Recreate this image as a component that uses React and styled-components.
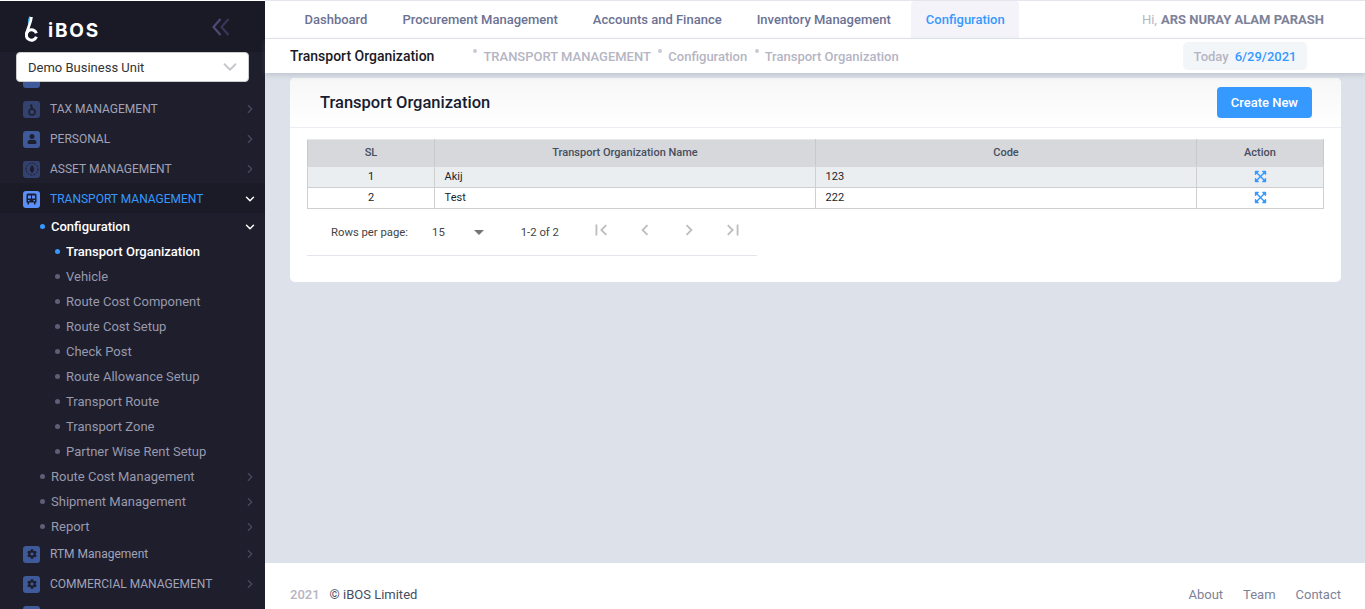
import React from 'react'
import styled, { createGlobalStyle } from 'styled-components'
import { ChevronRight, ChevronDown } from 'lucide-react'
import { FaExpandArrowsAlt, FaCog, FaUser } from 'react-icons/fa'
import { MdFirstPage, MdLastPage, MdChevronLeft, MdChevronRight, MdArrowDropDown } from 'react-icons/md'

const GlobalStyle = createGlobalStyle`
  html, body { margin: 0; padding: 0; height: 100%; overflow: hidden; }
  body { font-family: Roboto, "Liberation Sans", sans-serif; background: #fff; }
  * { box-sizing: border-box; }
`

const configItems = [
  'Vehicle',
  'Route Cost Component',
  'Route Cost Setup',
  'Check Post',
  'Route Allowance Setup',
  'Transport Route',
  'Transport Zone',
  'Partner Wise Rent Setup',
]

const LogoMark = () => (
  <svg width="14" height="26" viewBox="0 0 14 26" fill="none">
    <path d="M5.2 0.5 C3.6 3 3.4 6 4 9" stroke="#35a7e8" strokeWidth="1.6" />
    <path d="M6.4 1 C6 8 2 12 1.4 19" stroke="#fff" strokeWidth="2.8" />
    <path d="M11.4 20.8 A5.2 5.2 0 1 1 11.4 17.2" stroke="#fff" strokeWidth="3" />
  </svg>
)

const CollapseIcon = () => (
  <svg width="18" height="18" viewBox="0 0 18 18" fill="none" stroke="#494b74" strokeWidth="2.2">
    <polyline points="8.5,1 1.5,9 8.5,17" />
    <polyline points="16.5,1 9.5,9 16.5,17" opacity="0.6" />
  </svg>
)

const TaxIcon = () => (
  <svg width="12" height="13" viewBox="0 0 12 13" fill="none">
    <circle cx="6" cy="9" r="3" stroke="#1e1e2d" strokeWidth="1.5" />
    <path d="M6 6 L5 1.5" stroke="#1e1e2d" strokeWidth="2" />
  </svg>
)

const AssetIcon = () => (
  <svg width="14" height="14" viewBox="0 0 14 14" fill="none">
    <circle cx="7" cy="7" r="6" stroke="#1e1e2d" strokeWidth="1" strokeDasharray="2 1" />
    <path d="M7 3 C9.8 6 9.8 9 7 11 C4.2 9 4.2 6 7 3 Z" fill="#1e1e2d" />
  </svg>
)

const BusIcon = () => (
  <svg width="11" height="12" viewBox="0 0 11 12">
    <path
      d="M2 0.5 H9 A1.5 1.5 0 0 1 10.5 2 V9.5 H9.5 V11.5 H8 V9.5 H3 V11.5 H1.5 V9.5 H0.5 V2 A1.5 1.5 0 0 1 2 0.5 Z"
      fill="#1e1e2d"
    />
    <rect x="2" y="2.5" width="3" height="3" fill="#5b8ff9" />
    <rect x="6" y="2.5" width="3" height="3" fill="#5b8ff9" />
    <rect x="2" y="7" width="1.5" height="1.2" fill="#5b8ff9" />
    <rect x="7.5" y="7" width="1.5" height="1.2" fill="#5b8ff9" />
  </svg>
)

const App = () => {
  return (
    <>
      <GlobalStyle />
      <Page>
        <Sidebar>
          <Brand>
            <LogoLink>
              <LogoMark />
              <LogoText>iBOS</LogoText>
            </LogoLink>
            <Collapse>
              <CollapseIcon />
            </Collapse>
          </Brand>
          <UnitSelect>
            <span>Demo Business Unit</span>
            <ChevronDown size={22} strokeWidth={2} color="#c4c6cc" />
          </UnitSelect>
          <Menu>
            <TopRow>
              <IconBox />
            </TopRow>
            <TopRow>
              <IconBox $dim><TaxIcon /></IconBox>
              <TopLabel>TAX MANAGEMENT</TopLabel>
              <Arrow><ChevronRight size={14} /></Arrow>
            </TopRow>
            <TopRow>
              <IconBox><FaUser size={10} /></IconBox>
              <TopLabel>PERSONAL</TopLabel>
              <Arrow><ChevronRight size={14} /></Arrow>
            </TopRow>
            <TopRow>
              <IconBox $dim><AssetIcon /></IconBox>
              <TopLabel>ASSET MANAGEMENT</TopLabel>
              <Arrow><ChevronRight size={14} /></Arrow>
            </TopRow>
            <TopRow $active>
              <IconBox $active><BusIcon /></IconBox>
              <TopLabel $active>TRANSPORT MANAGEMENT</TopLabel>
              <Arrow $open><ChevronDown size={14} strokeWidth={2.5} /></Arrow>
            </TopRow>
            <SubRow $active>
              <Dot $active />
              <SubLabel $active>Configuration</SubLabel>
              <Arrow $open><ChevronDown size={14} strokeWidth={2.5} /></Arrow>
            </SubRow>
            <LeafRow $active>
              <Dot $active />
              <SubLabel $active>Transport Organization</SubLabel>
            </LeafRow>
            {configItems.map((item) => (
              <LeafRow key={item}>
                <Dot />
                <SubLabel>{item}</SubLabel>
              </LeafRow>
            ))}
            <SubRow>
              <Dot />
              <SubLabel>Route Cost Management</SubLabel>
              <Arrow><ChevronRight size={14} /></Arrow>
            </SubRow>
            <SubRow>
              <Dot />
              <SubLabel>Shipment Management</SubLabel>
              <Arrow><ChevronRight size={14} /></Arrow>
            </SubRow>
            <SubRow>
              <Dot />
              <SubLabel>Report</SubLabel>
              <Arrow><ChevronRight size={14} /></Arrow>
            </SubRow>
            <TopRow>
              <IconBox><FaCog size={10} /></IconBox>
              <TopLabel>RTM Management</TopLabel>
              <Arrow><ChevronRight size={14} /></Arrow>
            </TopRow>
            <TopRow>
              <IconBox><FaCog size={10} /></IconBox>
              <TopLabel>COMMERCIAL MANAGEMENT</TopLabel>
              <Arrow><ChevronRight size={14} /></Arrow>
            </TopRow>
            <TopRow>
              <IconBox />
            </TopRow>
          </Menu>
        </Sidebar>
        <Main>
          <TopNav>
            <NavTab>Dashboard</NavTab>
            <NavTab>Procurement Management</NavTab>
            <NavTab>Accounts and Finance</NavTab>
            <NavTab>Inventory Management</NavTab>
            <NavTab $active>Configuration</NavTab>
            <Greeting>Hi, <strong>ARS NURAY ALAM PARASH</strong></Greeting>
          </TopNav>
          <SubHeader>
            <PageName>Transport Organization</PageName>
            <Crumbs>
              <Crumb>TRANSPORT MANAGEMENT</Crumb>
              <Crumb>Configuration</Crumb>
              <Crumb>Transport Organization</Crumb>
            </Crumbs>
            <DateBadge>Today <b>6/29/2021</b></DateBadge>
          </SubHeader>
          <Content>
            <Card>
              <CardHead>
                <CardTitle>Transport Organization</CardTitle>
                <CreateButton>Create New</CreateButton>
              </CardHead>
              <CardBody>
                <Table>
                  <colgroup>
                    <col style={{ width: 127 }} />
                    <col style={{ width: 381 }} />
                    <col style={{ width: 381 }} />
                    <col style={{ width: 127 }} />
                  </colgroup>
                  <thead>
                    <tr>
                      <Th>SL</Th>
                      <Th>Transport Organization Name</Th>
                      <Th>Code</Th>
                      <Th>Action</Th>
                    </tr>
                  </thead>
                  <tbody>
                    <BodyRow $striped>
                      <Td $center>1</Td>
                      <Td>Akij</Td>
                      <Td>123</Td>
                      <Td $center><ViewIcon /></Td>
                    </BodyRow>
                    <BodyRow>
                      <Td $center>2</Td>
                      <Td>Test</Td>
                      <Td>222</Td>
                      <Td $center><ViewIcon /></Td>
                    </BodyRow>
                  </tbody>
                </Table>
                <Pagination>
                  <RowsLabel>Rows per page:</RowsLabel>
                  <RowsValue>15</RowsValue>
                  <MdArrowDropDown size={24} color="#757575" />
                  <RangeLabel>1-2 of 2</RangeLabel>
                  <PagerIcons>
                    <MdFirstPage size={22} />
                    <MdChevronLeft size={22} />
                    <MdChevronRight size={22} />
                    <MdLastPage size={22} />
                  </PagerIcons>
                </Pagination>
              </CardBody>
            </Card>
          </Content>
          <Footer>
            <div><FooterYear>2021</FooterYear>© iBOS Limited</div>
            <FooterLinks>
              <span>About</span>
              <span>Team</span>
              <span>Contact</span>
            </FooterLinks>
          </Footer>
        </Main>
      </Page>
    </>
  )
}

const Page = styled.div`
  display: flex;
  width: 1365px;
  height: 609px;
  overflow: hidden;
`
const Sidebar = styled.aside`
  position: relative;
  width: 265px;
  flex: none;
  background: #1e1e2d;
  overflow: hidden;
  border-top: 1px solid #fff;
`
const Brand = styled.div`
  display: flex;
  align-items: center;
  justify-content: space-between;
  height: 51px;
  padding: 0 35px 0 25px;
  background: #1a1a27;
`
const LogoLink = styled.div`
  display: flex;
  align-items: flex-end;
  gap: 9px;
  margin-top: 4px;
`
const LogoText = styled.span`
  color: #fff;
  font-size: 19px;
  line-height: 22px;
  font-weight: 700;
  letter-spacing: 1.8px;
  font-family: Inter, Roboto, sans-serif;
`
const Collapse = styled.div`
  display: flex;
`
const UnitSelect = styled.div`
  position: absolute;
  z-index: 2;
  top: 51px;
  left: 16px;
  width: 233px;
  height: 30px;
  display: flex;
  align-items: center;
  justify-content: space-between;
  padding: 0 7px 0 11px;
  background: #fff;
  border: 1px solid #ccc;
  border-radius: 4px;
  font-size: 13px;
  color: #333;
`
const Menu = styled.nav`
  padding-top: 11px;
`
const TopRow = styled.div`
  display: flex;
  align-items: center;
  height: 30px;
  padding: 2px 8px 0 23px;
  background: ${(p) => (p.$active ? '#1b1b28' : 'transparent')};
`
const IconBox = styled.span`
  display: flex;
  align-items: center;
  justify-content: center;
  width: 17px;
  height: 17px;
  border-radius: 3px;
  background: ${(p) => (p.$active ? '#5b8ff9' : p.$dim ? '#34426f' : '#3f5a9a')};
  color: #1e1e2d;
`
const TopLabel = styled.span`
  margin-left: 10px;
  font-size: 12px;
  color: ${(p) => (p.$active ? '#3699ff' : '#a2a3b7')};
`
const Arrow = styled.span`
  display: flex;
  margin-left: auto;
  color: ${(p) => (p.$open ? '#fff' : '#494b64')};
`
const SubRow = styled.div`
  display: flex;
  align-items: center;
  height: 25px;
  padding: 2px 8px 0 40px;
`
const LeafRow = styled(SubRow)`
  padding-left: 55px;
`
const Dot = styled.span`
  width: 5px;
  height: 5px;
  border-radius: 50%;
  flex: none;
  margin-right: 6px;
  background: ${(p) => (p.$active ? '#3699ff' : '#5e5e78')};
`
const SubLabel = styled.span`
  font-size: 13px;
  color: ${(p) => (p.$active ? '#fff' : '#9899ac')};
  font-weight: ${(p) => (p.$active ? 500 : 400)};
`
const Main = styled.div`
  flex: 1;
  min-width: 0;
  display: flex;
  flex-direction: column;
`
const TopNav = styled.div`
  display: flex;
  align-items: stretch;
  height: 39px;
  padding: 0 41px 0 25px;
  border-top: 1px solid #e4e6ef;
  border-bottom: 1px solid #e4e6ef;
  font-size: 13px;
`
const NavTab = styled.div`
  display: flex;
  align-items: center;
  padding: 0 14.5px;
  margin-right: 6px;
  font-size: 13px;
  font-weight: 500;
  color: ${(p) => (p.$active ? '#3699ff' : '#6c7293')};
  background: ${(p) => (p.$active ? '#f3f3f9' : 'transparent')};
  border-radius: 4px 4px 0 0;
`
const Greeting = styled.div`
  margin-left: auto;
  display: flex;
  align-items: center;
  gap: 4px;
  color: #b5b5c3;
  strong { color: #7e8299; font-weight: 700; }
`
const SubHeader = styled.div`
  display: flex;
  align-items: center;
  height: 34px;
  padding: 0 58px 0 25px;
  background: #fff;
  box-shadow: 0 2px 5px rgba(120, 130, 150, 0.3);
  z-index: 1;
`
const PageName = styled.div`
  font-size: 14px;
  font-weight: 500;
  color: #1a1a27;
`
const Crumbs = styled.div`
  display: flex;
  margin-left: 49px;
  gap: 17.4px;
`
const Crumb = styled.span`
  position: relative;
  font-size: 13px;
  font-weight: 500;
  color: #b5b5c3;
  &::before {
    content: '';
    position: absolute;
    left: -10px;
    top: 0;
    width: 4px;
    height: 4px;
    border-radius: 50%;
    background: #c9c9d4;
  }
`
const DateBadge = styled.div`
  margin-left: auto;
  height: 28px;
  padding: 0 10.5px;
  display: flex;
  align-items: center;
  gap: 6px;
  background: #f3f6f9;
  border-radius: 5px;
  font-size: 13px;
  font-weight: 500;
  color: #b5b5c3;
  b { color: #3699ff; font-weight: 500; }
`
const Content = styled.main`
  flex: 1;
  padding: 5px 24px 0 25px;
  background: #dde1e9;
`
const Card = styled.section`
  height: 204px;
  background: #fff;
  border-radius: 5px;
`
const CardHead = styled.div`
  display: flex;
  align-items: center;
  justify-content: space-between;
  height: 50px;
  padding: 0 29px 0 30px;
  border-bottom: 1px solid #ebedf3;
  background: linear-gradient(#f7f7f8, #fff);
  border-radius: 5px 5px 0 0;
`
const CardTitle = styled.h3`
  margin: 0;
  font-size: 16.5px;
  font-weight: 500;
  color: #181c32;
`
const CreateButton = styled.button`
  height: 31px;
  padding: 0 14px;
  border: 0;
  border-radius: 4px;
  background: #3699ff;
  color: #fff;
  font-family: inherit;
  font-size: 13px;
  font-weight: 500;
`
const CardBody = styled.div`
  padding: 11px 18px 0 17px;
`
const Table = styled.table`
  width: 100%;
  table-layout: fixed;
  border-collapse: collapse;
  font-size: 11px;
`
const Th = styled.th`
  height: 27px;
  padding: 0 0 2px;
  background: #d6d8db;
  border: 1px solid #d6d8db;
  border-right-color: #c9c9c9;
  border-top-color: #e8e8e8;
  color: #464e5f;
  font-size: 11px;
  font-weight: 500;
  &:first-child { border-left-color: #c9c9c9; }
  &:last-child { border-right-color: #c9c9c9; }
`
const BodyRow = styled.tr`
  background: ${(p) => (p.$striped ? '#ebeef1' : '#fff')};
`
const Td = styled.td`
  height: 21px;
  padding: 0 ${(p) => (p.$center ? 0 : '9.6px')} 2px;
  text-align: ${(p) => (p.$center ? 'center' : 'left')};
  border: 1px solid #cfcfcf;
  color: #212529;
  line-height: 1;
`
const ViewIcon = styled(FaExpandArrowsAlt)`
  display: block;
  margin: 0 auto;
  width: 13px;
  height: 13px;
  color: #3699ff;
`
const Pagination = styled.div`
  display: flex;
  align-items: center;
  width: 450px;
  height: 47px;
  padding-left: 24px;
  border-bottom: 1px solid #e4e6ef;
  font-size: 11.3px;
  color: #444;
`
const RowsLabel = styled.span``
const RowsValue = styled.span`
  margin: 0 22px 0 24px;
`
const RangeLabel = styled.span`
  margin-left: 30px;
`
const PagerIcons = styled.div`
  display: flex;
  gap: 22px;
  margin-left: 31px;
  margin-top: -4px;
  color: #bdbdbd;
`
const Footer = styled.footer`
  display: flex;
  align-items: center;
  justify-content: space-between;
  height: 46px;
  padding: 17px 24px 0 25px;
  background: #fff;
  font-size: 13px;
  color: #464e5f;
`
const FooterYear = styled.span`
  margin-right: 10px;
  font-weight: 500;
  color: #b5b5c3;
`
const FooterLinks = styled.div`
  display: flex;
  gap: 20px;
  color: #7e8299;
`

export default App
